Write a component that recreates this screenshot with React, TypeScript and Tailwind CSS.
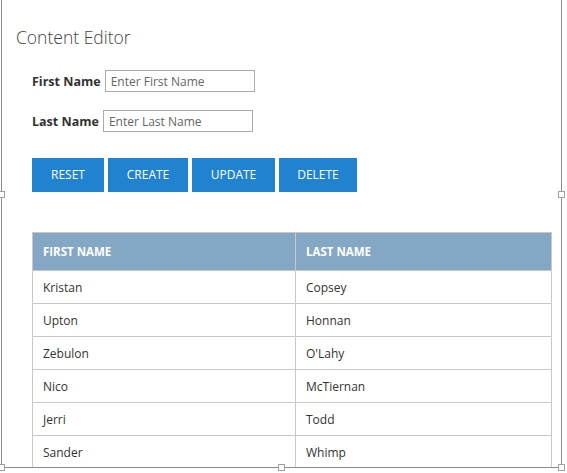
import React from 'react';

const rows = [
  ['Kristan', 'Copsey'],
  ['Upton', 'Honnan'],
  ['Zebulon', "O'Lahy"],
  ['Nico', 'McTiernan'],
  ['Jerri', 'Todd'],
  ['Sander', 'Whimp'],
];

function Handle({ className }: { className: string }) {
  return <div className={`absolute h-[7px] w-[7px] border border-[#a0a0a0] bg-white ${className}`} />;
}

export default function App() {
  return (
    <div
      className="relative h-[473px] w-[567px] overflow-hidden bg-white text-[#333]"
      style={{ fontFamily: '"Open Sans", "Noto Sans", sans-serif' }}
    >
      <div className="relative ml-[1px] h-[468px] w-[561px] border-x border-b border-[#8c8c8c]">
        <div className="h-full overflow-hidden pl-[14px] pt-[25px]">
          <h2 className="text-[17.5px] leading-[24px] font-light text-[#444]">Content Editor</h2>

          <div className="mt-[21px] flex flex-col gap-[18px] pl-[16px]">
            <div className="flex items-center gap-[4px]">
              <span className="pt-[3px] text-[12.5px] font-bold text-[#333]">First Name</span>
              <input
                placeholder="Enter First Name"
                className="h-[22px] w-[150px] border border-[#ababab] px-[5px] text-[12px] text-[#444] placeholder:text-[#666] outline-none"
              />
            </div>
            <div className="flex items-center gap-[4px]">
              <span className="pt-[3px] text-[12.5px] font-bold text-[#333]">Last Name</span>
              <input
                placeholder="Enter Last Name"
                className="h-[22px] w-[150px] border border-[#ababab] px-[5px] text-[12px] text-[#444] placeholder:text-[#666] outline-none"
              />
            </div>
          </div>

          <div className="mt-[26px] flex gap-[4px] pl-[16px]">
            {[
              ['RESET', 'w-[72px]'],
              ['CREATE', 'w-[80px]'],
              ['UPDATE', 'w-[83px]'],
              ['DELETE', 'w-[78px]'],
            ].map(([label, w]) => (
              <button
                key={label}
                className={`h-[34px] ${w} bg-[#2183d0] text-[12px] text-white`}
              >
                {label}
              </button>
            ))}
          </div>

          <table className="mt-[40px] ml-[16px] w-[520px] border-collapse text-[12px]">
            <thead>
              <tr className="h-[38px] bg-[#84a7c4] text-left text-[11.5px] text-white">
                <th className="w-[263px] border border-[#c8c8c8] pl-[10px] font-bold">FIRST NAME</th>
                <th className="border border-[#c8c8c8] pl-[10px] font-bold">LAST NAME</th>
              </tr>
            </thead>
            <tbody>
              {rows.map(([first, last]) => (
                <tr key={first} className="h-[33px]">
                  <td className="border border-[#c8c8c8] pl-[10px] pt-[2px] text-[#333]">{first}</td>
                  <td className="border border-[#c8c8c8] pl-[10px] pt-[2px] text-[#333]">{last}</td>
                </tr>
              ))}
            </tbody>
          </table>
        </div>

        <Handle className="left-[-4px] top-[191px]" />
        <Handle className="right-[-4px] top-[191px]" />
        <Handle className="left-[-4px] bottom-[-4px]" />
        <Handle className="left-[276px] bottom-[-4px]" />
        <Handle className="right-[-4px] bottom-[-4px]" />
      </div>
    </div>
  );
}
